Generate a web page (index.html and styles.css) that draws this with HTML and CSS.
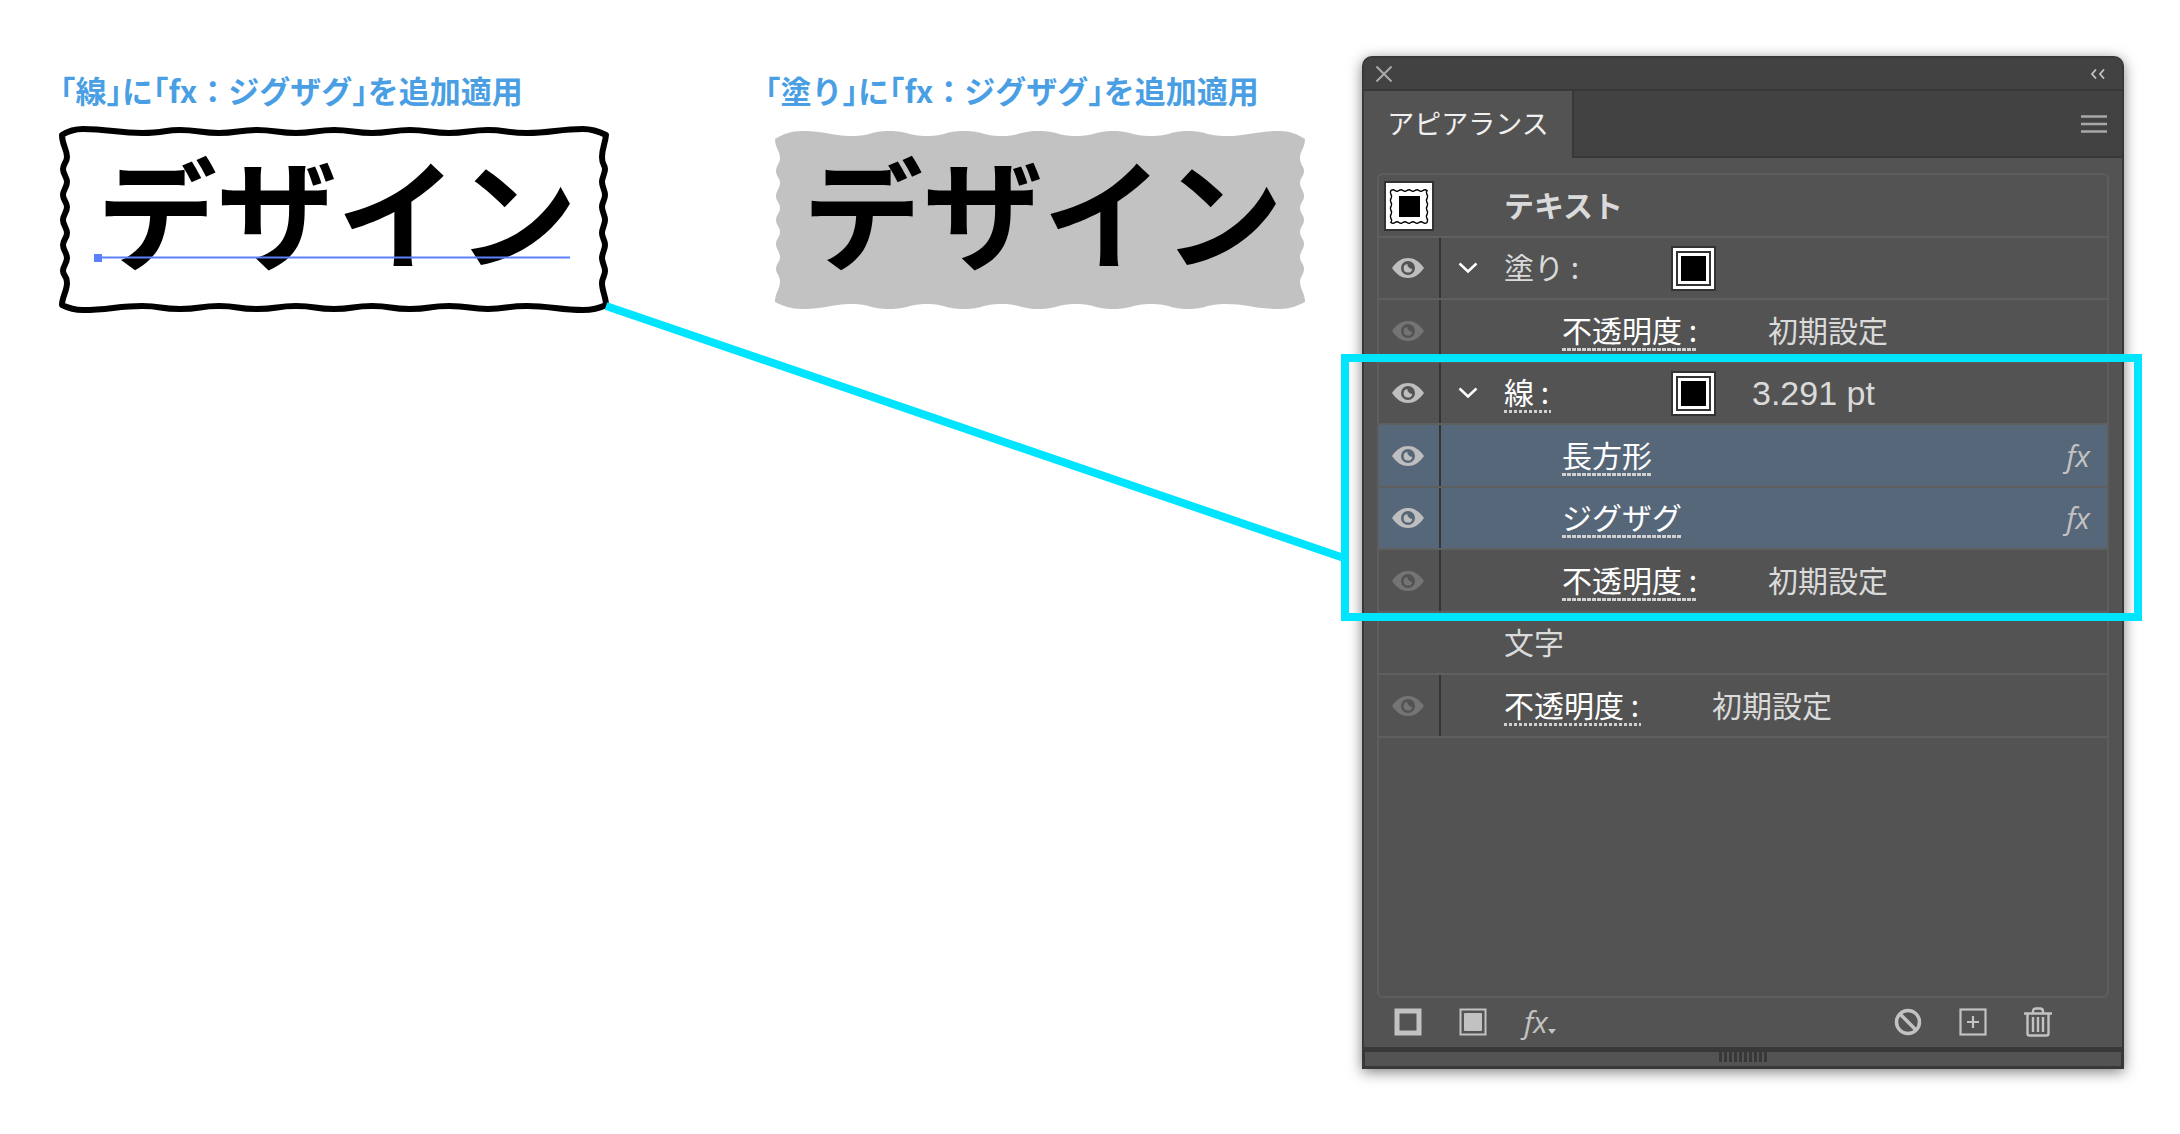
FILE: index.html
```html
<!DOCTYPE html>
<html lang="ja">
<head>
<meta charset="utf-8">
<title>アピアランス</title>
<link rel="stylesheet" href="styles.css">
</head>
<body>
<svg class="defs" aria-hidden="true">
  <symbol id="eye" viewBox="0 0 32 20">
    <path fill-rule="evenodd" d="M0 10C5 3 10 0 16 0s11 3 16 10c-5 7-10 10-16 10S5 17 0 10zM16 3a7 7 0 1 0 0 14a7 7 0 1 0 0-14z"/>
    <path d="M15.500 6a4.300 4.300 0 1 0 4.700 4.700a3 3 0 0 1-3.200-1.200a3 3 0 0 1-1.500-3.500z"/>
  </symbol>
  <symbol id="chevron" viewBox="0 0 20 12">
    <path d="M1.500 1.500L10 9.500L18.500 1.500" fill="none" stroke="currentColor" stroke-width="2.500"/>
  </symbol>
</svg>
<main class="page">
  <figure class="sample">
    <figcaption>「線」に「fx<span class="full">：</span>ジグザグ」を追加適用</figcaption>
    <svg class="art" viewBox="60 124 548 190" width="548" height="190">
      <path fill="none" stroke="#000" stroke-width="6" stroke-linejoin="round" d="M62 135
        C70 130 76 129 83 129 C108 129 118 133 142 133 S163 130 180 130 S202 133 219 133 S240 130 257 130 S279 133 296 133 S317 130 334 130 S355 133 372 133 S393 130 410 130 S432 133 449 133 S471 130 488 130 S508 133 527 133 C550 133 560 129 583 129 C592 129 598 131 606 135
        C605 145 602 148 602 157 S605 164 605 169 S602 177 602 182 S605 190 605 195 S602 202 602 207 S605 215 605 220 S602 228 602 233 S605 240 605 245 S602 253 602 258 S605 266 605 271 S602 278 602 283 C602 291 606 297 606 305
        C598 309 592 310 583 310 C560 310 550 306 527 306 S508 309 488 309 S471 306 449 306 S432 309 410 309 S393 306 372 306 S355 309 334 309 S317 306 296 306 S279 309 257 309 S240 306 219 306 S202 309 180 309 S163 306 142 306 C118 306 108 310 83 310 C76 310 70 309 62 305
        C62 297 67 291 67 283 S63 276 63 271 S67 263 67 258 S63 250 63 245 S67 238 67 233 S63 225 63 220 S67 212 67 207 S63 200 63 195 S67 187 67 182 S63 174 63 169 S67 162 67 157 C67 149 62 145 62 135Z"/>
      <text class="word" x="97" y="261">デザイン</text>
      <path d="M98 257.500H570" stroke="#5c7ffb" stroke-width="2"/>
      <rect x="94" y="254" width="8" height="8" fill="#5c7ffb"/>
    </svg>
  </figure>
  <figure class="sample">
    <figcaption>「塗り」に「fx<span class="full">：</span>ジグザグ」を追加適用</figcaption>
    <svg class="art art-filled" viewBox="775 124 548 190" width="548" height="190">
      <path fill="#c2c2c2" d="M775 139
        C783 134 791 131 802 131 C826 131 832 136 852 136 S870 131 889 131 S908 136 927 136 S945 131 964 131 S983 136 1001 136 S1020 131 1039 131 S1057 136 1076 136 S1095 131 1113 131 S1132 136 1151 136 S1170 131 1188 131 S1206 136 1226 136 C1246 136 1256 131 1280 131 C1290 131 1297 134 1305 139
        C1305 148 1300 151 1300 158 S1304 166 1304 171 S1300 178 1300 183 S1304 191 1304 196 S1300 203 1300 208 S1304 215 1304 220 S1300 227 1300 232 S1304 239 1304 244 S1300 252 1300 257 S1304 264 1304 269 S1300 277 1300 282 C1300 289 1305 293 1305 302
        C1297 306 1290 309 1280 309 C1256 309 1246 304 1226 304 S1206 309 1188 309 S1170 304 1151 304 S1132 309 1113 309 S1095 304 1076 304 S1057 309 1039 309 S1020 304 1001 304 S983 309 964 309 S945 304 927 304 S908 309 889 309 S870 304 852 304 C832 304 826 309 802 309 C791 309 783 306 775 302
        C775 293 780 289 780 282 S776 274 776 269 S780 262 780 257 S776 249 776 244 S780 237 780 232 S776 225 776 220 S780 213 780 208 S776 201 776 196 S780 188 780 183 S776 176 776 171 S780 163 780 158 C780 151 775 148 775 139Z"/>
      <text class="word" x="803" y="261">デザイン</text>
    </svg>
  </figure>

  <section class="panel">
    <header class="titlebar">
      <button class="plain" aria-label="閉じる"><svg width="16" height="16" viewBox="0 0 16 16"><path d="M0.500 0.500L15.500 15.500M15.500 0.500L0.500 15.500" stroke="#aaa" stroke-width="2"/></svg></button>
      <button class="plain" aria-label="折りたたむ"><svg width="14" height="10" viewBox="0 0 14 10"><path d="M5 0.500L1 5L5 9.500M13 0.500L9 5L13 9.500" fill="none" stroke="#c4c4c4" stroke-width="1.800"/></svg></button>
    </header>
    <div class="tabs">
      <button class="plain tab">アピアランス</button>
      <button class="plain menu" aria-label="パネルメニュー"><svg width="26" height="18" viewBox="0 0 26 18"><path d="M0 1.500H26M0 9H26M0 16.500H26" stroke="#a8a8a8" stroke-width="2.400"/></svg></button>
    </div>
    <div class="list-area">
      <ul class="rows">
        <li class="row">
          <span class="thumb"><svg width="46" height="46" viewBox="0 0 46 46"><rect width="46" height="46" fill="#fff"/><path fill="none" stroke="#000" stroke-width="1.500" d="M5 7.500q2-1.500 4 0t4 0t4 0t4 0t4 0t4 0t4 0t4 0t4 0q-1.500 2 0 4t0 4t0 4t0 4t0 4t0 4t0 4t0 4q-2 1.500-4 0t-4 0t-4 0t-4 0t-4 0t-4 0t-4 0t-4 0t-4 0q1.500-2 0-4t0-4t0-4t0-4t0-4t0-4t0-4t0-4z"/><rect x="13" y="13" width="21" height="21"/></svg></span>
          <span class="label strong">テキスト</span>
        </li>
        <li class="row">
          <button class="plain eye" aria-label="表示"><svg width="32" height="20"><use href="#eye"/></svg></button>
          <button class="plain toggle" aria-label="開閉"><svg width="20" height="12"><use href="#chevron"/></svg></button>
          <span class="label wide">塗り :</span>
          <button class="plain swatch" aria-label="塗りのカラー"></button>
        </li>
        <li class="row nested">
          <button class="plain eye dim" aria-label="表示"><svg width="32" height="20"><use href="#eye"/></svg></button>
          <a class="label link" href="#">不透明度 :</a>
          <span class="label value">初期設定</span>
        </li>
        <li class="row">
          <button class="plain eye" aria-label="表示"><svg width="32" height="20"><use href="#eye"/></svg></button>
          <button class="plain toggle" aria-label="開閉"><svg width="20" height="12"><use href="#chevron"/></svg></button>
          <span class="wide"><a class="label link sparse" href="#">線 :</a></span>
          <button class="plain swatch" aria-label="線のカラー"></button>
          <span class="weight">3.291 pt</span>
        </li>
        <li class="row nested selected">
          <button class="plain eye" aria-label="表示"><svg width="32" height="20"><use href="#eye"/></svg></button>
          <a class="label link" href="#">長方形</a>
          <span class="fx">fx</span>
        </li>
        <li class="row nested selected">
          <button class="plain eye" aria-label="表示"><svg width="32" height="20"><use href="#eye"/></svg></button>
          <a class="label link" href="#">ジグザグ</a>
          <span class="fx">fx</span>
        </li>
        <li class="row nested">
          <button class="plain eye dim" aria-label="表示"><svg width="32" height="20"><use href="#eye"/></svg></button>
          <a class="label link" href="#">不透明度 :</a>
          <span class="label value">初期設定</span>
        </li>
        <li class="row row-text">
          <span class="label">文字</span>
        </li>
        <li class="row opacity">
          <button class="plain eye dim" aria-label="表示"><svg width="32" height="20"><use href="#eye"/></svg></button>
          <a class="label link sparse" href="#">不透明度 :</a>
          <span class="label value">初期設定</span>
        </li>
      </ul>
    </div>
    <footer class="tools">
      <button class="plain" aria-label="新規線を追加"><svg width="28" height="28" viewBox="0 0 28 28"><rect x="3" y="3" width="22" height="22" fill="none" stroke="#c2c2c2" stroke-width="5"/></svg></button>
      <button class="plain" aria-label="新規塗りを追加"><svg width="28" height="28" viewBox="0 0 28 28"><rect x="1.500" y="1.500" width="25" height="25" fill="none" stroke="#c2c2c2" stroke-width="2"/><rect x="5" y="5" width="18" height="18" rx="1" fill="#c2c2c2"/></svg></button>
      <button class="plain add-fx" aria-label="新規効果を追加"><span class="fx">fx</span><svg width="8" height="5" viewBox="0 0 8 5"><path d="M0 0H8L4 5Z" fill="#c2c2c2"/></svg></button>
      <span class="spacer"></span>
      <button class="plain" aria-label="アピアランスを消去"><svg width="28" height="28" viewBox="0 0 28 28"><circle cx="14" cy="14" r="11.500" fill="none" stroke="#c2c2c2" stroke-width="3.500"/><path d="M6 6L22 22" stroke="#c2c2c2" stroke-width="3.500"/></svg></button>
      <button class="plain" aria-label="項目を複製"><svg width="28" height="28" viewBox="0 0 28 28"><rect x="1.500" y="1.500" width="25" height="25" fill="none" stroke="#c2c2c2" stroke-width="2.200"/><path d="M8 14H20M14 8V20" stroke="#c2c2c2" stroke-width="2.200"/></svg></button>
      <button class="plain" aria-label="項目を削除"><svg width="28" height="30" viewBox="0 0 28 30"><path d="M0 6.500H28M9 6V4.500Q9 1.500 12 1.500H16Q19 1.500 19 4.500V6M3.500 7V26.500Q3.500 28.500 5.500 28.500H22.500Q24.500 28.500 24.500 26.500V7M9 10V25M14 10V25M19 10V25" fill="none" stroke="#c2c2c2" stroke-width="2.400"/></svg></button>
    </footer>
    <div class="resize"><span class="grip"></span></div>
    <div class="highlight"></div>
  </section>

  <svg class="connector" viewBox="0 0 738 252" preserveAspectRatio="none" aria-hidden="true"><path d="M0 0L738 252" stroke="#00e5ff" stroke-width="8" vector-effect="non-scaling-stroke"/></svg>
</main>
</body>
</html>
```
FILE: styles.css
```css
* {
  box-sizing: border-box;
}

body {
  margin: 0;
  background: #fff;
  font-family: "Noto Sans CJK JP", sans-serif;
}

.defs {
  position: absolute;
  width: 0;
  height: 0;
}

.page {
  position: relative;
  display: grid;
  grid-template-columns: 705fr 597fr 762fr;
  align-items: start;
  padding: 56px 56px 66px 60px;
}

/* Artwork samples */
.sample {
  margin: 0;
  padding-top: 14px;
}

.sample figcaption {
  height: 54px;
  color: #4a9fe4;
  font-size: 31px;
  font-weight: 700;
  font-feature-settings: "halt";
  line-height: 40px;
  white-space: nowrap;
}

.full {
  font-feature-settings: normal;
}

.art {
  display: block;
  overflow: visible;
}

.art-filled {
  margin-left: 10px;
}

.word {
  font-size: 120px;
  font-weight: 700;
}

.connector {
  position: absolute;
  top: 306px;
  left: 27.800%;
  width: 33.850%;
  height: 252px;
  overflow: visible;
}

/* Panel */
.plain {
  display: flex;
  align-items: center;
  justify-content: center;
  margin: 0;
  padding: 0;
  border: 0;
  background: none;
  color: inherit;
  font: inherit;
}

.panel {
  position: relative;
  border: 2px solid #383838;
  border-radius: 10px 10px 0 0;
  background: #535353;
  box-shadow: 0 3px 14px rgba(0, 0, 0, 0.5);
  color: #dadada;
  font-size: 30px;
}

.titlebar {
  display: flex;
  align-items: center;
  justify-content: space-between;
  height: 33px;
  padding: 0 17px 0 12px;
  border-bottom: 2px solid #383838;
  border-radius: 8px 8px 0 0;
  background: #424242;
}

.tabs {
  display: flex;
  justify-content: space-between;
  height: 67px;
  background: #424242;
}

.tab {
  width: 208px;
  padding-bottom: 4px;
  background: #535353;
  color: #f0f0f0;
  font-size: 27px;
}

.menu {
  flex: 1;
  justify-content: flex-end;
  padding-right: 15px;
  border-bottom: 2px solid #383838;
  border-left: 2px solid #383838;
}

.list-area {
  min-height: 825px;
  margin: 15px 13px 0;
  border: 2px solid #5e5e5e;
  border-radius: 6px;
}

.rows {
  margin: 0;
  padding: 0;
  list-style: none;
}

.row {
  display: flex;
  align-items: center;
  height: 62px;
  border-bottom: 2px solid #5f5f5f;
}

.row:nth-child(odd) {
  height: 63px;
}

.selected {
  background: #56677a;
}

.eye {
  align-self: stretch;
  width: 62px;
  padding-right: 3px;
  border-right: 2px solid #343434;
  color: #bebebe;
  fill: currentColor;
}

.dim {
  color: #747474;
}

.toggle {
  width: 63px;
  padding-right: 10px;
  color: #fff;
}

.thumb {
  display: flex;
  width: 50px;
  height: 50px;
  margin: 0 70px 0 5px;
  border: 2px solid #333;
}

.label {
  padding-bottom: 4px;
  line-height: 36px;
  white-space: nowrap;
}

.wide {
  display: flex;
  width: 167px;
}

.strong {
  font-weight: 700;
}

.link {
  background: repeating-linear-gradient(90deg, #d0d0d0 0 4px, transparent 4px 5px) left bottom / 100% 3px no-repeat;
  color: #fff;
  text-decoration: none;
}

.sparse {
  padding-right: 2px;
  background-image: repeating-linear-gradient(90deg, #d0d0d0 0 3px, transparent 3px 5px);
}

.nested .link {
  margin-left: 121px;
}

.opacity .link {
  margin-left: 63px;
}

.row-text {
  padding-left: 125px;
}

.value {
  margin-left: 71px;
}

.weight {
  margin-left: 36px;
  font-family: "Liberation Sans", sans-serif;
  font-size: 34px;
}

.swatch {
  width: 25px;
  height: 25px;
  margin: 0 10px;
  background: #000;
  box-shadow: 0 0 0 3px #fff, 0 0 0 5px #333, 0 0 0 8px #fff, 0 0 0 10px #333;
}

.fx {
  color: #c2c2c2;
  font-family: "Open Sans", sans-serif;
  font-size: 30px;
  font-style: italic;
  font-weight: 400;
  line-height: 36px;
}

.row .fx {
  margin: 0 17px 0 auto;
}

.tools {
  display: flex;
  align-items: center;
  gap: 37px;
  height: 49px;
  padding: 0 70px 2px 30px;
}

.add-fx svg {
  margin-top: 20px;
}

.spacer {
  flex: 1;
}

.resize {
  height: 20px;
  border: solid #383838;
  border-width: 5px 1px 1px;
}

.grip {
  display: block;
  width: 48px;
  height: 10px;
  margin: 0 auto;
  background: repeating-linear-gradient(90deg, #383838 0 3px, transparent 3px 5px);
}

/* Frame around the stroke entries */
.highlight {
  position: absolute;
  top: 296px;
  right: -20px;
  left: -23px;
  height: 267px;
  border: 8px solid #00e5ff;
  pointer-events: none;
}
```
